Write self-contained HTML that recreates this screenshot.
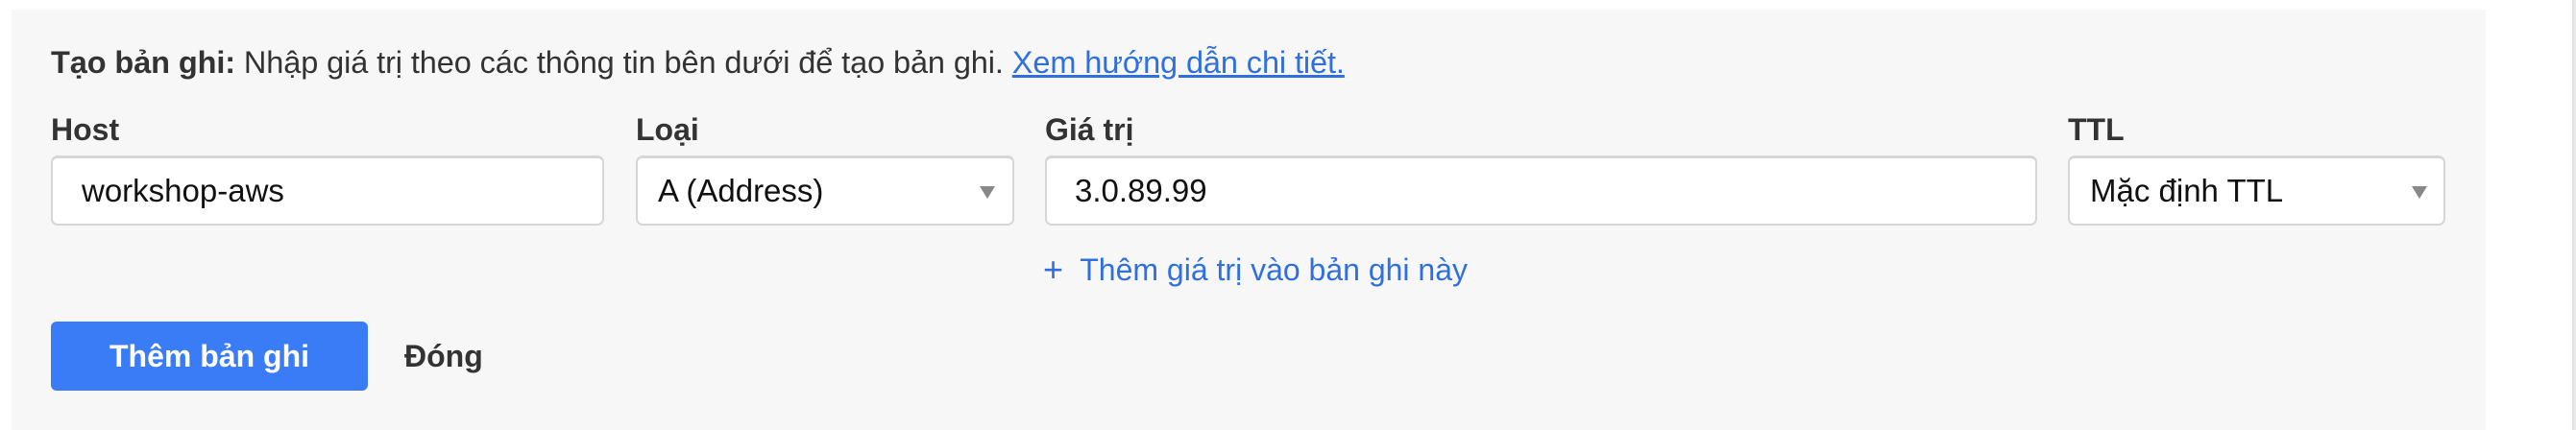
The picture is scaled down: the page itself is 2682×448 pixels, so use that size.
<!DOCTYPE html>
<html><head><meta charset="utf-8"><style>
*{box-sizing:border-box;margin:0;padding:0}
html,body{width:2682px;height:448px;overflow:hidden;background:#fff;font-family:"Liberation Sans",Arial,sans-serif}
.panel{position:absolute;left:12px;top:10px;width:2576px;height:438px;background:#f7f7f7}
.edge{position:absolute;left:2678px;top:0;width:4px;height:448px;background:linear-gradient(to right,#ddd,#eee)}
.a{position:absolute;white-space:nowrap}
.intro{left:53px;top:47px;font-size:32.5px;color:#333;letter-spacing:-0.1px}
.intro b{color:#333}
.intro a{color:#2f6fde;text-decoration:underline}
.lbl{top:117px;font-size:32px;font-weight:bold;color:#333}
.box{position:absolute;top:162px;height:73px;background:#fff;border:2px solid #d6d6d6;border-top-width:3px;border-radius:7px;font-size:33px;color:#111;line-height:68px}
.arr{position:absolute;top:29px;width:0;height:0;border-left:8px solid transparent;border-right:8px solid transparent;border-top:13px solid #888}
.add{left:1086px;top:259px;font-size:32px;color:#2f6fde}
.btn{position:absolute;left:53px;top:335px;width:330px;height:72px;background:#3a7cf5;border-radius:6px;color:#fff;font-size:32px;font-weight:bold;text-align:center;line-height:72px}
.close{left:421px;top:353px;font-size:32px;font-weight:bold;color:#333}
</style></head><body>
<div class="panel"></div>
<div class="edge"></div>
<div class="a intro"><b>Tạo bản ghi:</b> Nhập giá trị theo các thông tin bên dưới để tạo bản ghi. <a>Xem hướng dẫn chi tiết.</a></div>
<div class="a lbl" style="left:53px">Host</div>
<div class="a lbl" style="left:662px">Loại</div>
<div class="a lbl" style="left:1088px">Giá trị</div>
<div class="a lbl" style="left:2153px">TTL</div>
<div class="box" style="left:53px;width:576px;padding-left:30px">workshop-aws</div>
<div class="box" style="left:662px;width:394px;padding-left:21px">A (Address)<span class="arr" style="left:356px"></span></div>
<div class="box" style="left:1088px;width:1033px;padding-left:29px">3.0.89.99</div>
<div class="box" style="left:2153px;width:393px;padding-left:21px">Mặc định TTL<span class="arr" style="left:356px"></span></div>
<div class="a add"><span style="font-size:36px;position:relative;top:1px">+</span>&nbsp; Thêm giá trị vào bản ghi này</div>
<div class="btn">Thêm bản ghi</div>
<div class="a close">Đóng</div>
</body></html>
